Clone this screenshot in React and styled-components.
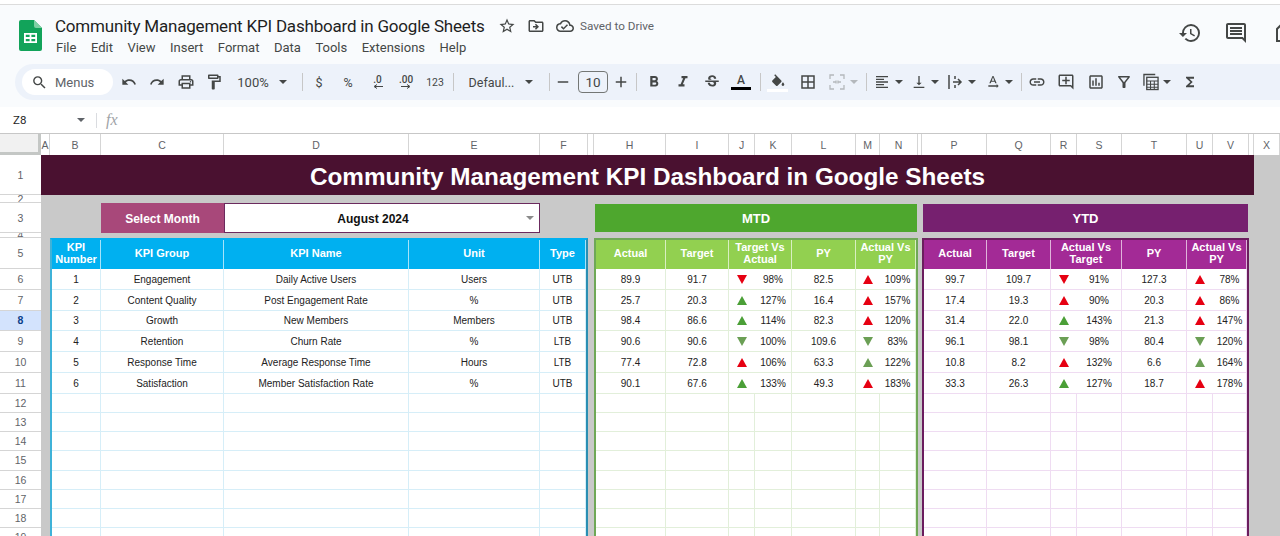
import React from "react";
import styled, { createGlobalStyle } from "styled-components";
import {
  MdAdd,
  MdBorderAll,
  MdFormatAlignLeft,
  MdFormatBold,
  MdFormatItalic,
  MdFunctions,
  MdHistory,
  MdLink,
  MdOutlineAddComment,
  MdOutlineCloudDone,
  MdOutlineDriveFileMove,
  MdOutlineFilterAlt,
  MdOutlineFormatPaint,
  MdOutlineInsertChart,
  MdOutlineInsertComment,
  MdOutlinePrint,
  MdRedo,
  MdRemove,
  MdSearch,
  MdStarBorder,
  MdStrikethroughS,
  MdTextRotationNone,
  MdUndo,
  MdVerticalAlignBottom,
} from "react-icons/md";

const menus = ["File", "Edit", "View", "Insert", "Format", "Data", "Tools", "Extensions", "Help"];

const columns = ["A", "B", "C", "D", "E", "F", "", "H", "I", "J", "K", "L", "M", "N", "", "P", "Q", "R", "S", "T", "U", "V", "", "X"];

const kpis = [
  [1, "Engagement", "Daily Active Users", "Users", "UTB"],
  [2, "Content Quality", "Post Engagement Rate", "%", "UTB"],
  [3, "Growth", "New Members", "Members", "UTB"],
  [4, "Retention", "Churn Rate", "%", "LTB"],
  [5, "Response Time", "Average Response Time", "Hours", "LTB"],
  [6, "Satisfaction", "Member Satisfaction Rate", "%", "UTB"],
];

// trend codes: first letter is direction, second is colour
const mtd = [
  ["89.9", "91.7", "dr", "98%", "82.5", "ur", "109%"],
  ["25.7", "20.3", "ug", "127%", "16.4", "ur", "157%"],
  ["98.4", "86.6", "ug", "114%", "82.3", "ur", "120%"],
  ["90.6", "90.6", "dm", "100%", "109.6", "dm", "83%"],
  ["77.4", "72.8", "ur", "106%", "63.3", "um", "122%"],
  ["90.1", "67.6", "ug", "133%", "49.3", "ur", "183%"],
];

const ytd = [
  ["99.7", "109.7", "dr", "91%", "127.3", "ur", "78%"],
  ["17.4", "19.3", "ur", "90%", "20.3", "ur", "86%"],
  ["31.4", "22.0", "ug", "143%", "21.3", "ur", "147%"],
  ["96.1", "98.1", "dm", "98%", "80.4", "dm", "120%"],
  ["10.8", "8.2", "ur", "132%", "6.6", "um", "164%"],
  ["33.3", "26.3", "ug", "127%", "18.7", "ur", "178%"],
];

const kpiHead = [["KPI Number", 1], ["KPI Group", 1], ["KPI Name", 1], ["Unit", 1], ["Type", 1]];
const mtdHead = [["Actual", 1], ["Target", 1], ["Target Vs Actual", 2], ["PY", 1], ["Actual Vs PY", 2]];
const ytdHead = [["Actual", 1], ["Target", 1], ["Actual Vs Target", 2], ["PY", 1], ["Actual Vs PY", 2]];

const trendColors = { r: "#e60012", g: "#4b9f37", m: "#6b9f55" };

const GlobalStyle = createGlobalStyle`
  html, body {
    margin: 0;
    padding: 0;
    background: #ffffff;
    overflow: hidden;
  }
  * {
    box-sizing: border-box;
  }
`;

const Page = styled.div`
  width: 1280px;
  height: 536px;
  overflow: hidden;
  background: #f9fbfd;
  font-family: Roboto, "Liberation Sans", sans-serif;
  color: #444746;
`;

const TopStrip = styled.div`
  height: 5px;
  background: #ffffff;
  border-bottom: 1px solid #dcdcdc;
`;

const DocHeader = styled.header`
  height: 59px;
  display: flex;
  align-items: flex-start;
  padding: 15px 0 0 19px;
  position: relative;
`;

const Logo = styled.svg`
  width: 23px;
  height: 31px;
  flex: none;
`;

const DocInfo = styled.div`
  margin-left: 13px;
  margin-top: -6px;
`;

const TitleRow = styled.div`
  display: flex;
  align-items: center;
  height: 24px;
  color: #5f6368;
`;

const DocTitle = styled.span`
  font-family: Roboto, sans-serif;
  font-size: 17px;
  letter-spacing: -0.2px;
  color: #1f1f1f;
  white-space: nowrap;
  width: 427px;
  margin-right: 10px;
`;

const TitleIcon = styled.span`
  display: flex;
  width: 29px;
  justify-content: center;
  font-size: 18px;
  color: #444746;
`;

const Saved = styled.span`
  font-size: 11.7px;
  color: #5f6368;
  margin-left: 1px;
`;

const MenuBar = styled.nav`
  display: flex;
  gap: 14.5px;
  margin-top: 2px;
  font-size: 13px;
  color: #444746;
  padding-left: 1px;
`;

const HeaderActions = styled.div`
  position: absolute;
  top: 16px;
  left: 1178px;
  display: flex;
  gap: 22px;
  font-size: 24px;
  color: #444746;
  span {
    display: flex;
  }
  span:last-child {
    margin-left: 4px;
  }
`;

const ToolbarWrap = styled.div`
  height: 43px;
  padding-left: 15px;
`;

const Toolbar = styled.div`
  height: 36px;
  display: flex;
  align-items: center;
  padding-left: 7px;
  background: #edf2fa;
  border-radius: 18px 0 0 18px;
`;

const SearchPill = styled.div`
  width: 91px;
  height: 26px;
  flex: none;
  display: flex;
  align-items: center;
  gap: 7px;
  padding-left: 9px;
  background: #ffffff;
  border-radius: 13px;
  font-size: 13px;
  color: #5f6368;
  svg {
    font-size: 17px;
    color: #444746;
  }
`;

const Tool = styled.div`
  width: ${(p) => p.$w || 28}px;
  margin-left: ${(p) => p.$ml || 0}px;
  height: 26px;
  flex: none;
  display: flex;
  align-items: center;
  justify-content: center;
  gap: ${(p) => p.$gap ?? 4}px;
  font-size: ${(p) => p.$size || 18}px;
  color: ${(p) => p.$color || "#444746"};
`;

const Caret = styled.i`
  display: block;
  flex: none;
  width: 0;
  height: 0;
  border-left: 4px solid transparent;
  border-right: 4px solid transparent;
  border-top: 4px solid ${(p) => p.$color || "#444746"};
`;

const Divider = styled.div`
  width: 1px;
  height: 18px;
  flex: none;
  margin-left: ${(p) => p.$ml || 0}px;
  margin-right: ${(p) => p.$mr || 0}px;
  background: #c7c7c7;
`;

const ToolText = styled.span`
  font-size: ${(p) => p.$size || 13}px;
  font-weight: ${(p) => p.$weight || 400};
  color: #444746;
`;

const Decimal = styled.div`
  display: flex;
  flex-direction: column;
  align-items: center;
  font-size: 10px;
  font-weight: 500;
  line-height: 9px;
  svg {
    width: 11px;
    height: 5px;
  }
`;

const FontSize = styled.div`
  width: 30px;
  height: 22px;
  margin: 0 1px 0 2px;
  flex: none;
  display: flex;
  align-items: center;
  justify-content: center;
  border: 1px solid #747775;
  border-radius: 4px;
  font-size: 13.5px;
  color: #444746;
`;

const TextColor = styled.div`
  display: flex;
  flex-direction: column;
  align-items: center;
  width: 20px;
  font-size: 12px;
  font-weight: 500;
  line-height: 12px;
  color: #444746;
  &::after {
    content: "";
    width: 20px;
    height: 3px;
    margin-top: 1px;
    background: #000000;
  }
`;

const FillColor = styled.div`
  display: flex;
  flex-direction: column;
  align-items: center;
  svg {
    width: 15px;
    height: 15px;
  }
  &::after {
    content: "";
    width: 21px;
    height: 3px;
    margin-top: 1px;
    background: #ffffff;
  }
`;

const FormulaBar = styled.div`
  height: 27px;
  display: flex;
  align-items: center;
  background: #ffffff;
  border-bottom: 1px solid #c7c7c7;
  padding-left: 13px;
`;

const CellRef = styled.span`
  width: 64px;
  font-size: 11.5px;
  color: #1f1f1f;
`;

const FormulaMark = styled.span`
  margin-left: 9px;
  font-family: "Liberation Serif", serif;
  font-style: italic;
  font-size: 16px;
  color: #a0a4a8;
`;

const FormulaDivider = styled.div`
  width: 1px;
  height: 15px;
  margin-left: 11px;
  background: #dadce0;
`;

const Sheet = styled.div`
  display: grid;
  grid-template-columns:
    41px 9px 51px 123px 185px 131px 48px 6px 72px 63px 26px 37px 64px 24px 38px 4px
    65px 64px 26px 45px 65px 26px 36px 5px 26px;
  grid-template-rows: 21px 40px 8px 30px 5px 31px repeat(6, 20.8px) repeat(8, 19.2px);
  background: #c9c9c9;
  font-family: "Liberation Sans", Arial, sans-serif;
`;

const Corner = styled.div`
  background: #f1f1f1;
  border-right: 3px solid #c4c7c5;
  border-bottom: 3px solid #c4c7c5;
`;

const ColumnHead = styled.div`
  display: flex;
  align-items: center;
  justify-content: center;
  background: #ffffff;
  border-right: 1px solid #d5d5d5;
  font-size: 10.5px;
  color: #5f6368;
  overflow: hidden;
`;

const RowHead = styled.div`
  grid-column: 1;
  grid-row: ${(p) => p.$row + 1};
  display: flex;
  align-items: center;
  justify-content: center;
  overflow: hidden;
  font-size: 10.5px;
  font-weight: ${(p) => (p.$active ? 700 : 400)};
  color: ${(p) => (p.$active ? "#0b3f8a" : "#5f6368")};
  background: ${(p) => (p.$active ? "#d3e3fd" : "#ffffff")};
  border-bottom: 1px solid #d5d5d5;
`;

const TitleBanner = styled.h1`
  grid-column: 2 / 25;
  grid-row: 2;
  margin: 0;
  padding-top: 3px;
  display: flex;
  align-items: center;
  justify-content: center;
  background: #4a1130;
  color: #ffffff;
  font-size: 24.3px;
  font-weight: 700;
`;

const MonthLabel = styled.div`
  grid-column: 4;
  grid-row: 4;
  padding-top: 1px;
  display: flex;
  align-items: center;
  justify-content: center;
  background: #a8487a;
  color: #ffffff;
  font-size: 12px;
  font-weight: 700;
`;

const MonthSelect = styled.div`
  grid-column: 5 / 7;
  grid-row: 4;
  position: relative;
  display: flex;
  align-items: center;
  justify-content: center;
  background: #ffffff;
  border: 1px solid #6b2a5e;
  color: #111111;
  font-size: 12px;
  font-weight: 700;
  padding: 1px 18px 0 0;
  ${Caret} {
    position: absolute;
    right: 5px;
    top: 12px;
  }
`;

const PeriodBanner = styled.div`
  grid-column: ${(p) => p.$from} / ${(p) => p.$to};
  grid-row: 4;
  margin: 1px;
  display: flex;
  align-items: center;
  justify-content: center;
  background: ${(p) => p.$bg};
  color: #ffffff;
  font-size: 13px;
  font-weight: 700;
`;

const Panel = styled.section`
  grid-column: ${(p) => p.$from} / ${(p) => p.$to};
  grid-row: 6 / 21;
  display: grid;
  grid-template-columns: subgrid;
  grid-template-rows: subgrid;
  background: #ffffff;
  border: 2px solid ${(p) => p.$edge};
  border-left-color: ${(p) => p.$left || p.$edge};
  border-top-color: ${(p) => p.$top || p.$edge};
  --line: ${(p) => p.$line};
  --head: ${(p) => p.$head};
`;

const HeadCell = styled.div`
  grid-column: span ${(p) => p.$span};
  display: flex;
  align-items: center;
  justify-content: center;
  text-align: center;
  padding: 0 4px 3px;
  background: var(--head);
  border-right: 1px solid rgba(255, 255, 255, 0.65);
  color: #ffffff;
  font-size: 11px;
  font-weight: 700;
  line-height: 12px;
  &:last-of-type {
    border-right: none;
  }
`;

const Cell = styled.div`
  display: flex;
  align-items: center;
  justify-content: center;
  padding-top: 1px;
  border-right: ${(p) => (p.$joined ? "none" : "1px solid var(--line)")};
  border-bottom: 1px solid var(--line);
  font-size: 10px;
  color: #222222;
  white-space: nowrap;
  overflow: hidden;
`;

const Triangle = styled.i`
  display: block;
  width: 0;
  height: 0;
  border-left: 5px solid transparent;
  border-right: 5px solid transparent;
  border-${(p) => (p.$up ? "bottom" : "top")}: 9px solid ${(p) => p.$color};
`;

function SheetsLogo() {
  return (
    <Logo viewBox="0 0 23 31">
      <path d="M2 0h13l8 8v21a2 2 0 0 1-2 2H2a2 2 0 0 1-2-2V2a2 2 0 0 1 2-2z" fill="#12a35a" />
      <path d="M15 0l8 8h-6a2 2 0 0 1-2-2z" fill="#7fd0a4" />
      <path d="M5 13h13v10H5zm1.8 1.8v2.3h3.8v-2.3zm5.6 0v2.3h3.8v-2.3zm-5.6 4.1v2.3h3.8v-2.3zm5.6 0v2.3h3.8v-2.3z" fill="#ffffff" fillRule="evenodd" />
    </Logo>
  );
}

function DecimalTool({ label, dir }) {
  const arrow = dir === "left" ? "M11 2.5H3M5 .5l-3 2 3 2" : "M0 2.5h8M6 .5l3 2-3 2";
  return (
    <Decimal>
      {label}
      <svg viewBox="0 0 11 5" fill="none" stroke="#444746" strokeWidth="1">
        <path d={arrow} />
      </svg>
    </Decimal>
  );
}

function MergeIcon() {
  return (
    <svg width="16" height="16" viewBox="0 0 16 16" fill="none" stroke="#b4b8bc" strokeWidth="1.3">
      <path d="M1 5V1h4M11 1h4v4M1 11v4h4M11 15h4v-4M4 8h3M7 6.5V9.5M12 8H9M9 6.5V9.5" />
    </svg>
  );
}

function WrapIcon() {
  return (
    <svg width="16" height="18" viewBox="0 0 16 18" fill="none" stroke="#444746" strokeWidth="1.5">
      <path d="M2 2v14" />
      <path d="M6 9h8M11 6l3 3-3 3M8 3v3M8 12v3" />
    </svg>
  );
}

function TableIcon() {
  return (
    <svg width="17" height="18" viewBox="0 0 17 18" fill="none" stroke="#444746" strokeWidth="1.4">
      <path d="M13 1H1v12" />
      <rect x="4" y="4" width="12" height="13" />
      <path d="M4 8h12M4 11.5h12M4 14.5h12M8 8v9M12 8v9" strokeWidth="1.1" />
    </svg>
  );
}

function FillIcon() {
  return (
    <svg viewBox="0 0 22 18" fill="#444746">
      <path d="M16.56 8.94L7.62 0 6.21 1.41l2.38 2.38-5.15 5.15c-.59.59-.59 1.54 0 2.12l5.5 5.5c.29.29.68.44 1.06.44s.77-.15 1.06-.44l5.5-5.5c.59-.58.59-1.53 0-2.12zM19 11.5s-2 2.17-2 3.5c0 1.1.9 2 2 2s2-.9 2-2c0-1.33-2-3.5-2-3.5z" />
    </svg>
  );
}

function TopBar() {
  return (
    <DocHeader>
      <SheetsLogo />
      <DocInfo>
        <TitleRow>
          <DocTitle>Community Management KPI Dashboard in Google Sheets</DocTitle>
          <TitleIcon><MdStarBorder /></TitleIcon>
          <TitleIcon><MdOutlineDriveFileMove /></TitleIcon>
          <TitleIcon><MdOutlineCloudDone /></TitleIcon>
          <Saved>Saved to Drive</Saved>
        </TitleRow>
        <MenuBar>
          {menus.map((m) => (
            <span key={m}>{m}</span>
          ))}
        </MenuBar>
      </DocInfo>
      <HeaderActions>
        <span><MdHistory /></span>
        <span><MdOutlineInsertComment /></span>
        <span>
          <svg width="24" height="24" viewBox="0 0 24 24" fill="none" stroke="#444746" strokeWidth="2">
            <path d="M3 20V8l5-5h12v17z" />
          </svg>
        </span>
      </HeaderActions>
    </DocHeader>
  );
}

function Tools() {
  return (
    <ToolbarWrap>
      <Toolbar>
        <SearchPill>
          <MdSearch />
          Menus
        </SearchPill>
        <Tool $ml={2} $size={16}><MdUndo /></Tool>
        <Tool $size={16}><MdRedo /></Tool>
        <Tool $w={29}><MdOutlinePrint /></Tool>
        <Tool><MdOutlineFormatPaint /></Tool>
        <Tool $w={68} $gap={10}><ToolText>100%</ToolText><Caret /></Tool>
        <Divider $ml={6} $mr={2} />
        <Tool><ToolText $size={12.5}>$</ToolText></Tool>
        <Tool $w={30}><ToolText $size={12.5}>%</ToolText></Tool>
        <Tool $w={29}><DecimalTool label=".0" dir="left" /></Tool>
        <Tool><DecimalTool label=".00" dir="right" /></Tool>
        <Tool $w={30}><ToolText $size={10.5}>123</ToolText></Tool>
        <Divider $ml={3} $mr={6} />
        <Tool $w={82} $gap={11}><ToolText $size={12.5}>Defaul...</ToolText><Caret /></Tool>
        <Divider $ml={7} />
        <Tool $w={26}><MdRemove /></Tool>
        <FontSize>10</FontSize>
        <Tool $w={24}><MdAdd /></Tool>
        <Divider $ml={3} $mr={3} />
        <Tool><MdFormatBold /></Tool>
        <Tool $w={30}><MdFormatItalic /></Tool>
        <Tool><MdStrikethroughS /></Tool>
        <Tool $w={30}><TextColor>A</TextColor></Tool>
        <Divider $ml={4} />
        <Tool $w={32}><FillColor><FillIcon /></FillColor></Tool>
        <Tool $w={30}><MdBorderAll /></Tool>
        <Tool $w={40} $gap={5}><MergeIcon /><Caret $color="#b4b8bc" /></Tool>
        <Divider $ml={3} />
        <Tool $w={29} $ml={7} $gap={5}><MdFormatAlignLeft /><Caret /></Tool>
        <Tool $w={28} $ml={8}><MdVerticalAlignBottom /><Caret /></Tool>
        <Tool $w={29} $ml={8} $gap={5}><WrapIcon /><Caret /></Tool>
        <Tool $w={28} $ml={9}><MdTextRotationNone /><Caret /></Tool>
        <Divider $ml={8} />
        <Tool $ml={1}><MdLink /></Tool>
        <Tool $w={30}><MdOutlineAddComment /></Tool>
        <Tool $w={30}><MdOutlineInsertChart /></Tool>
        <Tool $w={26}><MdOutlineFilterAlt /></Tool>
        <Tool $w={28} $ml={6}><TableIcon /><Caret /></Tool>
        <Tool $w={16} $ml={11}><MdFunctions /></Tool>
      </Toolbar>
    </ToolbarWrap>
  );
}

function Trend({ code }) {
  return <Triangle $up={code[0] === "u"} $color={trendColors[code[1]]} />;
}

function EmptyRows({ rows, cols }) {
  return Array.from({ length: rows * cols }, (_, i) => <Cell key={i} />);
}

function PeriodPanel({ head, rows, ...rest }) {
  return (
    <Panel {...rest}>
      {head.map(([label, span]) => (
        <HeadCell key={label} $span={span}>{label}</HeadCell>
      ))}
      {rows.map((r) => (
        <React.Fragment key={r[0]}>
          <Cell>{r[0]}</Cell>
          <Cell>{r[1]}</Cell>
          <Cell $joined><Trend code={r[2]} /></Cell>
          <Cell>{r[3]}</Cell>
          <Cell>{r[4]}</Cell>
          <Cell $joined><Trend code={r[5]} /></Cell>
          <Cell>{r[6]}</Cell>
        </React.Fragment>
      ))}
      <EmptyRows rows={8} cols={7} />
    </Panel>
  );
}

export default function App() {
  return (
    <Page>
      <GlobalStyle />
      <TopStrip />
      <TopBar />
      <Tools />
      <FormulaBar>
        <CellRef>Z8</CellRef>
        <Caret $color="#5f6368" />
        <FormulaDivider />
        <FormulaMark>fx</FormulaMark>
      </FormulaBar>
      <Sheet>
        <Corner />
        {columns.map((c, i) => (
          <ColumnHead key={i}>{c}</ColumnHead>
        ))}
        {Array.from({ length: 19 }, (_, i) => (
          <RowHead key={i} $row={i + 1} $active={i + 1 === 8}>{i + 1}</RowHead>
        ))}
        <TitleBanner>Community Management KPI Dashboard in Google Sheets</TitleBanner>
        <MonthLabel>Select Month</MonthLabel>
        <MonthSelect>August 2024<Caret $color="#8a8a8a" /></MonthSelect>
        <PeriodBanner $from={9} $to={16} $bg="#4ea72e">MTD</PeriodBanner>
        <PeriodBanner $from={17} $to={24} $bg="#76206f">YTD</PeriodBanner>
        <Panel $from={3} $to={8} $edge="#2a8fb3" $left="#3fb2d8" $top="#00b0f0" $head="#00b0f0" $line="#d6eef8">
          {kpiHead.map(([label, span]) => (
            <HeadCell key={label} $span={span}>{label}</HeadCell>
          ))}
          {kpis.map((k) => (
            <React.Fragment key={k[0]}>
              {k.map((v, i) => (
                <Cell key={i}>{v}</Cell>
              ))}
            </React.Fragment>
          ))}
          <EmptyRows rows={8} cols={5} />
        </Panel>
        <PeriodPanel $from={9} $to={16} $edge="#6fa857" $head="#92d050" $line="#e2efda" head={mtdHead} rows={mtd} />
        <PeriodPanel $from={17} $to={24} $edge="#6b1d5e" $head="#a32a96" $line="#efdcf2" head={ytdHead} rows={ytd} />
      </Sheet>
    </Page>
  );
}
